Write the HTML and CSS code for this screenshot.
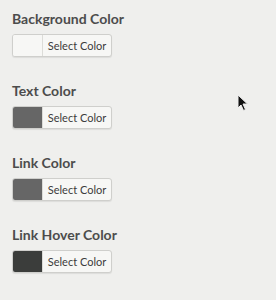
FILE: index.html
```html
<!DOCTYPE html>
<html lang="en">
<head>
    <meta charset="UTF-8">
    <meta name="viewport" content="width=device-width, initial-scale=1.0">
    <title>Colors</title>
    <link rel="stylesheet" href="styles.css">
</head>
<body>
    <div class="settings">
        <div class="field">
            <h3>Background Color</h3>
            <button class="picker">
                <span class="swatch swatch-bg"></span>
                <span class="label">Select Color</span>
            </button>
        </div>
        <div class="field">
            <h3>Text Color</h3>
            <button class="picker">
                <span class="swatch swatch-text"></span>
                <span class="label">Select Color</span>
            </button>
        </div>
        <div class="field">
            <h3>Link Color</h3>
            <button class="picker">
                <span class="swatch swatch-link"></span>
                <span class="label">Select Color</span>
            </button>
        </div>
        <div class="field">
            <h3>Link Hover Color</h3>
            <button class="picker">
                <span class="swatch swatch-hover"></span>
                <span class="label">Select Color</span>
            </button>
        </div>
    </div>

    <!-- mouse pointer -->
    <svg class="cursor" width="12" height="18" viewBox="0 0 12 18">
        <path d="M1 1 L1 14 L4 11 L6.5 16.5 L8.5 15.5 L6 10 L10.5 10 Z" fill="#111" stroke="#eee" stroke-width="1"/>
    </svg>
</body>
</html>
```

FILE: styles.css
```css
body {
    margin: 0;
    background: #efefed;
    font-family: "Lato", "Open Sans", sans-serif;
}
.settings {
    padding: 10px 12px;
}
.field {
    height: 72px;
}
.field h3 {
    margin: 0 0 6px;
    font-size: 14px;
    font-weight: bold;
    color: #4c4c4c;
    line-height: 18px;
}
.picker {
    display: flex;
    padding: 0;
    width: 100px;
    height: 23px;
    border: 1px solid #cfcfcc;
    border-radius: 3px;
    background: #f7f7f5;
    box-shadow: 0 1px 1px rgba(0,0,0,0.08);
    font-family: inherit;
    cursor: pointer;
}
.swatch {
    width: 29px;
    height: 100%;
    border-right: 1px solid #dcdcd8;
    border-radius: 2px 0 0 2px;
}
.swatch-bg { background: #f7f7f5; }
.swatch-text { background: #666666; }
.swatch-link { background: #666666; }
.swatch-hover { background: #3b3d3b; }
.label {
    flex: 1;
    align-self: center;
    font-size: 11px;
    color: #3c3c3c;
    text-align: center;
}
.cursor {
    position: absolute;
    left: 237px;
    top: 94px;
}
```
